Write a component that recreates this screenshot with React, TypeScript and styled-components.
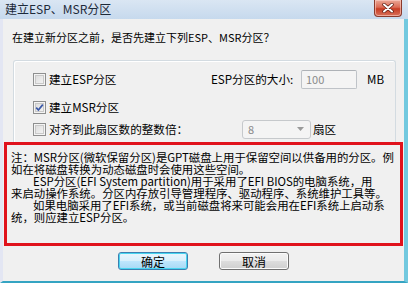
import React from "react";
import styled, { createGlobalStyle } from "styled-components";

const GlobalStyle = createGlobalStyle`
  html, body { margin: 0; padding: 0; background: #ffffff; }
  body { font-family: "Noto Sans CJK SC", "Noto Sans", sans-serif; }
  * { box-sizing: border-box; }
`;

const FONT = `"Noto Sans CJK SC", "Noto Sans", sans-serif`;

const Window = styled.div`
  width: 408px;
  height: 283px;
  display: flex;
  flex-direction: column;
  overflow: hidden;
  font-family: ${FONT};
  color: #000;
`;

const TitleBar = styled.div`
  height: 19px;
  flex: none;
  display: flex;
  align-items: flex-start;
  justify-content: space-between;
  padding: 0 6px 0 5px;
  background: linear-gradient(#dae6f3, #c6d9ed);
`;

const TitleText = styled.div`
  font-size: 12px;
  line-height: 18px;
  color: #1d2a3a;
  white-space: nowrap;
`;

const CloseButton = styled.div`
  width: 28px;
  height: 17px;
  display: flex;
  align-items: center;
  justify-content: center;
  border: 1px solid #8a3a2c;
  border-top: none;
  border-radius: 0 0 4px 4px;
  background: linear-gradient(#eaa897 0%, #dc6c55 45%, #c83d24 55%, #d8705a 100%);
  box-shadow: inset 0 0 0 1px rgba(255, 210, 200, 0.6);
`;

const Frame = styled.div`
  flex: 1;
  display: flex;
  flex-direction: column;
  background: #f0f0f0;
  border-left: 3px solid #e3e6f3;
  border-right: 4px solid #72c9df;
  border-bottom: 2px solid #35a4c2;
`;

const Question = styled.div`
  margin: 11px 0 0 9px;
  height: 14px;
  font-size: 11px;
  line-height: 14px;
  white-space: nowrap;
`;

const GroupBox = styled.div`
  margin: 16px 8px 0 10px;
  height: 82px;
  flex: none;
  border: 1px solid #d3dbe1;
  border-bottom: none;
  border-radius: 3px 3px 0 0;
  box-shadow: inset 1px 1px 0 #ffffff;
  padding: 8px 0 0 19px;
`;

const Row = styled.div<{ $top: number }>`
  display: flex;
  align-items: center;
  height: 20px;
  margin-top: ${(p) => p.$top}px;
`;

const CheckField = styled.label`
  width: 178px;
  display: flex;
  align-items: center;
  gap: 3px;
  font-size: 11.6px;
  white-space: nowrap;
`;

const Box = styled.span`
  width: 13px;
  height: 13px;
  flex: none;
  display: flex;
  align-items: center;
  justify-content: center;
  border: 1px solid #8e8f8f;
  background: #ffffff;
  box-shadow: inset 0 0 0 1px #f4f4f4, inset 0 0 0 2px #c9c9c9;
  background-image: linear-gradient(135deg, #d9d9d9, #f7f7f7);
`;

const FieldLabel = styled.span<{ $width: number }>`
  width: ${(p) => p.$width}px;
  font-size: 11.6px;
  white-space: nowrap;
`;

const TextInput = styled.div`
  width: 56px;
  height: 19px;
  border: 1px solid #bfc3c8;
  border-top-color: #aeb2b7;
  border-radius: 2px;
  background: #f4f4f4;
  color: #8a8a8a;
  font-size: 11px;
  line-height: 17px;
  padding-left: 4px;
`;

const Unit = styled.span<{ $left: number }>`
  margin-left: ${(p) => p.$left}px;
  font-size: 11.6px;
  white-space: nowrap;
`;

const Select = styled.div`
  margin-left: 31px;
  width: 69px;
  height: 19px;
  display: flex;
  align-items: center;
  justify-content: space-between;
  border: 1px solid #c6c9cc;
  border-radius: 3px;
  background: #f4f4f4;
  color: #8a8a8a;
  font-size: 11px;
  padding: 0 6px 0 5px;
`;

const Note = styled.div`
  margin: 0 1px;
  height: 104px;
  flex: none;
  border: 3px solid #e0121c;
  padding: 6px 0 0 4px;
  font-size: 11.4px;
  line-height: 12px;
`;

const NoteLine = styled.div<{ $indent?: boolean }>`
  white-space: nowrap;
  height: 12px;
  padding-left: ${(p) => (p.$indent ? 22 : 0)}px;
`;

const ButtonRow = styled.div`
  margin-top: 6px;
  display: flex;
  justify-content: center;
  gap: 31px;
`;

const Button = styled.div<{ $primary?: boolean }>`
  width: 70px;
  height: 18px;
  display: flex;
  align-items: center;
  justify-content: center;
  font-size: 12px;
  border-radius: 3px;
  border: 1px solid ${(p) => (p.$primary ? "#3c7fb1" : "#707070")};
  background: ${(p) =>
    p.$primary
      ? "linear-gradient(#eaf6fd 0%, #d9f0fc 48%, #bee6fd 52%, #a7d9f5 100%)"
      : "linear-gradient(#f2f2f2 0%, #ebebeb 48%, #dddddd 52%, #cfcfcf 100%)"};
  box-shadow: inset 0 0 0 1px ${(p) => (p.$primary ? "#48d5f0" : "#fbfbfb")};
`;

const Check = () => (
  <svg width="9" height="9" viewBox="0 0 9 9">
    <path d="M1.2 4.6 L3.4 7 L7.8 1.6" fill="none" stroke="#3a58a8" strokeWidth="1.7" />
  </svg>
);

const CloseX = () => (
  <svg width="12" height="10" viewBox="0 0 12 10">
    <path d="M2 1.5 L10 8.5 M10 1.5 L2 8.5" stroke="#5a1a10" strokeWidth="3.4" strokeLinecap="round" />
    <path d="M2 1.5 L10 8.5 M10 1.5 L2 8.5" stroke="#ffffff" strokeWidth="2" strokeLinecap="round" />
  </svg>
);

const Arrow = () => (
  <svg width="7" height="4" viewBox="0 0 7 4">
    <path d="M0 0 H7 L3.5 4 Z" fill="#9a9a9a" />
  </svg>
);

export default function App() {
  return (
    <>
      <GlobalStyle />
      <Window>
        <TitleBar>
          <TitleText>建立ESP、MSR分区</TitleText>
          <CloseButton>
            <CloseX />
          </CloseButton>
        </TitleBar>
        <Frame>
          <Question>在建立新分区之前，是否先建立下列ESP、MSR分区？</Question>
          <GroupBox>
            <Row $top={0}>
              <CheckField>
                <Box />
                建立ESP分区
              </CheckField>
              <FieldLabel $width={90}>ESP分区的大小:</FieldLabel>
              <TextInput>100</TextInput>
              <Unit $left={10}>MB</Unit>
            </Row>
            <Row $top={8}>
              <CheckField>
                <Box>
                  <Check />
                </Box>
                建立MSR分区
              </CheckField>
            </Row>
            <Row $top={2}>
              <CheckField>
                <Box />
                对齐到此扇区数的整数倍：
              </CheckField>
              <Select>
                <span>8</span>
                <Arrow />
              </Select>
              <Unit $left={2}>扇区</Unit>
            </Row>
          </GroupBox>
          <Note>
            <NoteLine>注：MSR分区(微软保留分区)是GPT磁盘上用于保留空间以供备用的分区。例</NoteLine>
            <NoteLine>如在将磁盘转换为动态磁盘时会使用这些空间。</NoteLine>
            <NoteLine $indent>ESP分区(EFI System partition)用于采用了EFI BIOS的电脑系统，用</NoteLine>
            <NoteLine>来启动操作系统。分区内存放引导管理程序、驱动程序、系统维护工具等。</NoteLine>
            <NoteLine $indent>如果电脑采用了EFI系统，或当前磁盘将来可能会用在EFI系统上启动系</NoteLine>
            <NoteLine>统，则应建立ESP分区。</NoteLine>
          </Note>
          <ButtonRow>
            <Button $primary>确定</Button>
            <Button>取消</Button>
          </ButtonRow>
        </Frame>
      </Window>
    </>
  );
}
